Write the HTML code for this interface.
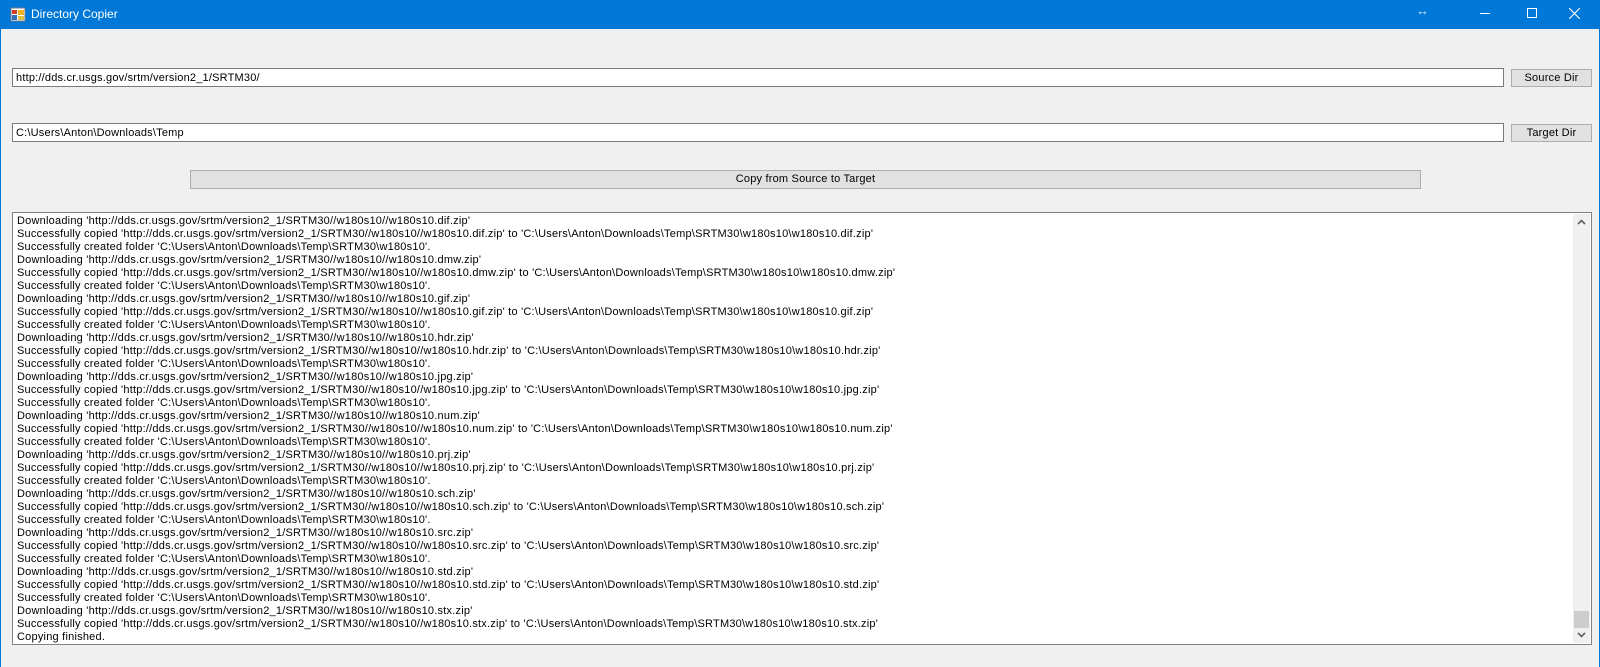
<!DOCTYPE html>
<html><head><meta charset="utf-8"><style>
*{margin:0;padding:0;box-sizing:border-box}
body{width:1600px;height:667px;background:#f0f0f0;font-family:"Liberation Sans",sans-serif;font-size:11px;color:#000;position:relative;overflow:hidden;border-left:1px solid #0078d7;border-right:1px solid #0078d7}
.title{position:absolute;left:0;top:0;width:1600px;height:29px;background:#0078d7;color:#fff;font-size:12px}
.title .t{position:absolute;left:30px;top:7px}
.tb{position:absolute;background:#fff;border:1px solid #7a7a7a;padding:3px 3px;white-space:nowrap;letter-spacing:0.2px}
.btn{position:absolute;background:#e1e1e1;border:1px solid #adadad;text-align:center;line-height:17px;letter-spacing:0.2px}
.log{position:absolute;left:11px;top:212px;width:1580px;height:433px;background:#fff;border:1px solid #828282;overflow:hidden}
.lines{position:absolute;left:4px;top:2px;line-height:13px;white-space:pre;letter-spacing:0.22px}
.sb{position:absolute;right:1px;top:1px;width:17px;height:429px;background:#f0f0f0}
</style></head><body>
<div class="title">
<svg style="position:absolute;left:9px;top:7px" width="16" height="16"><rect x="1" y="1" width="14" height="13" fill="#fff" stroke="#6a7a90"/><rect x="2" y="3" width="5" height="4" fill="#d04020"/><rect x="8" y="3" width="6" height="5" fill="#f0b020"/><rect x="2" y="8" width="5" height="5" fill="#3070c0"/><rect x="8" y="9" width="6" height="4" fill="#e0c040"/></svg>
<span class="t">Directory Copier</span>
<span style="position:absolute;left:1415px;top:3px;font-size:13px;color:#cfe2f5">↔</span>
<div style="position:absolute;left:1479px;top:13px;width:10px;height:1px;background:#fff"></div>
<div style="position:absolute;left:1526px;top:8px;width:10px;height:10px;border:1px solid #fff"></div>
<svg style="position:absolute;left:1568px;top:8px" width="11" height="11"><path d="M0 0L11 11M11 0L0 11" stroke="#fff" stroke-width="1.1"/></svg>
</div>
<div class="tb" style="left:11px;top:68px;width:1492px;height:19px">http://dds.cr.usgs.gov/srtm/version2_1/SRTM30/</div>
<div class="btn" style="left:1510px;top:69px;width:81px;height:18px">Source Dir</div>
<div class="tb" style="left:11px;top:123px;width:1492px;height:19px">C:\Users\Anton\Downloads\Temp</div>
<div class="btn" style="left:1510px;top:124px;width:81px;height:18px">Target Dir</div>
<div class="btn" style="left:189px;top:170px;width:1231px;height:19px">Copy from Source to Target</div>
<div class="log"><div class="lines">Downloading 'http://dds.cr.usgs.gov/srtm/version2_1/SRTM30//w180s10//w180s10.dif.zip'
Successfully copied 'http://dds.cr.usgs.gov/srtm/version2_1/SRTM30//w180s10//w180s10.dif.zip' to 'C:\Users\Anton\Downloads\Temp\SRTM30\w180s10\w180s10.dif.zip'
Successfully created folder 'C:\Users\Anton\Downloads\Temp\SRTM30\w180s10'.
Downloading 'http://dds.cr.usgs.gov/srtm/version2_1/SRTM30//w180s10//w180s10.dmw.zip'
Successfully copied 'http://dds.cr.usgs.gov/srtm/version2_1/SRTM30//w180s10//w180s10.dmw.zip' to 'C:\Users\Anton\Downloads\Temp\SRTM30\w180s10\w180s10.dmw.zip'
Successfully created folder 'C:\Users\Anton\Downloads\Temp\SRTM30\w180s10'.
Downloading 'http://dds.cr.usgs.gov/srtm/version2_1/SRTM30//w180s10//w180s10.gif.zip'
Successfully copied 'http://dds.cr.usgs.gov/srtm/version2_1/SRTM30//w180s10//w180s10.gif.zip' to 'C:\Users\Anton\Downloads\Temp\SRTM30\w180s10\w180s10.gif.zip'
Successfully created folder 'C:\Users\Anton\Downloads\Temp\SRTM30\w180s10'.
Downloading 'http://dds.cr.usgs.gov/srtm/version2_1/SRTM30//w180s10//w180s10.hdr.zip'
Successfully copied 'http://dds.cr.usgs.gov/srtm/version2_1/SRTM30//w180s10//w180s10.hdr.zip' to 'C:\Users\Anton\Downloads\Temp\SRTM30\w180s10\w180s10.hdr.zip'
Successfully created folder 'C:\Users\Anton\Downloads\Temp\SRTM30\w180s10'.
Downloading 'http://dds.cr.usgs.gov/srtm/version2_1/SRTM30//w180s10//w180s10.jpg.zip'
Successfully copied 'http://dds.cr.usgs.gov/srtm/version2_1/SRTM30//w180s10//w180s10.jpg.zip' to 'C:\Users\Anton\Downloads\Temp\SRTM30\w180s10\w180s10.jpg.zip'
Successfully created folder 'C:\Users\Anton\Downloads\Temp\SRTM30\w180s10'.
Downloading 'http://dds.cr.usgs.gov/srtm/version2_1/SRTM30//w180s10//w180s10.num.zip'
Successfully copied 'http://dds.cr.usgs.gov/srtm/version2_1/SRTM30//w180s10//w180s10.num.zip' to 'C:\Users\Anton\Downloads\Temp\SRTM30\w180s10\w180s10.num.zip'
Successfully created folder 'C:\Users\Anton\Downloads\Temp\SRTM30\w180s10'.
Downloading 'http://dds.cr.usgs.gov/srtm/version2_1/SRTM30//w180s10//w180s10.prj.zip'
Successfully copied 'http://dds.cr.usgs.gov/srtm/version2_1/SRTM30//w180s10//w180s10.prj.zip' to 'C:\Users\Anton\Downloads\Temp\SRTM30\w180s10\w180s10.prj.zip'
Successfully created folder 'C:\Users\Anton\Downloads\Temp\SRTM30\w180s10'.
Downloading 'http://dds.cr.usgs.gov/srtm/version2_1/SRTM30//w180s10//w180s10.sch.zip'
Successfully copied 'http://dds.cr.usgs.gov/srtm/version2_1/SRTM30//w180s10//w180s10.sch.zip' to 'C:\Users\Anton\Downloads\Temp\SRTM30\w180s10\w180s10.sch.zip'
Successfully created folder 'C:\Users\Anton\Downloads\Temp\SRTM30\w180s10'.
Downloading 'http://dds.cr.usgs.gov/srtm/version2_1/SRTM30//w180s10//w180s10.src.zip'
Successfully copied 'http://dds.cr.usgs.gov/srtm/version2_1/SRTM30//w180s10//w180s10.src.zip' to 'C:\Users\Anton\Downloads\Temp\SRTM30\w180s10\w180s10.src.zip'
Successfully created folder 'C:\Users\Anton\Downloads\Temp\SRTM30\w180s10'.
Downloading 'http://dds.cr.usgs.gov/srtm/version2_1/SRTM30//w180s10//w180s10.std.zip'
Successfully copied 'http://dds.cr.usgs.gov/srtm/version2_1/SRTM30//w180s10//w180s10.std.zip' to 'C:\Users\Anton\Downloads\Temp\SRTM30\w180s10\w180s10.std.zip'
Successfully created folder 'C:\Users\Anton\Downloads\Temp\SRTM30\w180s10'.
Downloading 'http://dds.cr.usgs.gov/srtm/version2_1/SRTM30//w180s10//w180s10.stx.zip'
Successfully copied 'http://dds.cr.usgs.gov/srtm/version2_1/SRTM30//w180s10//w180s10.stx.zip' to 'C:\Users\Anton\Downloads\Temp\SRTM30\w180s10\w180s10.stx.zip'
Copying finished.</div>
<div class="sb">
<svg style="position:absolute;left:4px;top:5px" width="9" height="6"><path d="M1 5L4.5 1.5L8 5" stroke="#606060" stroke-width="1.6" fill="none"/></svg>
<div style="position:absolute;left:1px;top:397px;width:15px;height:17px;background:#cdcdcd"></div>
<svg style="position:absolute;left:4px;top:418px" width="9" height="6"><path d="M1 1L4.5 4.5L8 1" stroke="#606060" stroke-width="1.6" fill="none"/></svg>
</div></div>
</body></html>
